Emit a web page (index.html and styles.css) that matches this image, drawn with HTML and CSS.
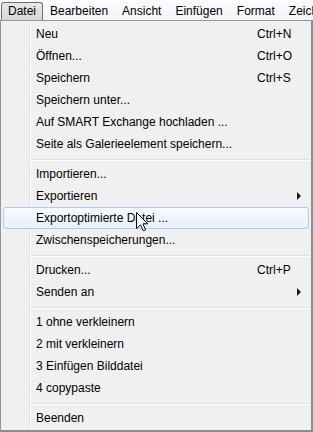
FILE: index.html
```html
<!DOCTYPE html>
<html lang="de">
<head>
  <meta charset="UTF-8">
  <title>Datei</title>
  <link rel="stylesheet" href="styles.css">
</head>
<body>

  <div class="menubar">
    <div class="bar-item active">Datei</div>
    <div class="bar-item">Bearbeiten</div>
    <div class="bar-item">Ansicht</div>
    <div class="bar-item">Einfügen</div>
    <div class="bar-item">Format</div>
    <div class="bar-item">Zeichnen</div>
  </div>

  <div class="menu">
    <div class="item"><span class="label">Neu</span><span class="key">Ctrl+N</span></div>
    <div class="item"><span class="label">Öffnen...</span><span class="key">Ctrl+O</span></div>
    <div class="item"><span class="label">Speichern</span><span class="key">Ctrl+S</span></div>
    <div class="item"><span class="label">Speichern unter...</span></div>
    <div class="item"><span class="label">Auf SMART Exchange hochladen ...</span></div>
    <div class="item"><span class="label">Seite als Galerieelement speichern...</span></div>
    <div class="sep"></div>
    <div class="item"><span class="label">Importieren...</span></div>
    <div class="item"><span class="label">Exportieren</span><span class="arrow"></span></div>
    <div class="item hover"><span class="label">Exportoptimierte Datei ...</span></div>
    <div class="item"><span class="label">Zwischenspeicherungen...</span></div>
    <div class="sep"></div>
    <div class="item"><span class="label">Drucken...</span><span class="key">Ctrl+P</span></div>
    <div class="item"><span class="label">Senden an</span><span class="arrow"></span></div>
    <div class="sep"></div>
    <div class="item"><span class="label">1 ohne verkleinern</span></div>
    <div class="item"><span class="label">2 mit verkleinern</span></div>
    <div class="item"><span class="label">3 Einfügen Bilddatei</span></div>
    <div class="item"><span class="label">4 copypaste</span></div>
    <div class="sep"></div>
    <div class="item"><span class="label">Beenden</span></div>
  </div>

  <svg class="cursor" width="13" height="20" viewBox="0 0 13 20">
    <path d="M0.5 0.5 L0.5 16.5 L4.5 12.8 L7.3 18.8 L9.6 17.8 L6.9 11.8 L11.8 11.8 Z" fill="#fff" stroke="#000" stroke-width="1" stroke-linejoin="miter"/>
  </svg>

</body>
</html>
```

FILE: styles.css
```css
body {
  margin: 0;
  width: 313px;
  height: 432px;
  overflow: hidden;
  background: #fff;
  font-family: "Liberation Sans", Arial, sans-serif;
  font-size: 12px;
  color: #000;
  position: relative;
}

.menubar {
  display: flex;
  height: 20px;
  padding-left: 1px;
  align-items: flex-end;
  background: linear-gradient(#fdfdfe, #f1f3f7);
  white-space: nowrap;
}

.bar-item {
  height: 17px;
  line-height: 16px;
  padding: 0 6px;
  border: 1px solid transparent;
  border-bottom: none;
}

.bar-item.active {
  border-color: #6e6e6e;
  border-radius: 3px 3px 0 0;
  background: linear-gradient(#e8e8e8, #d6d6d6);
}

.menu {
  box-sizing: border-box;
  width: 313px;
  padding: 2px 2px 1px 2px;
  border: 1px solid #979797;
  border-right: 2px solid #8c8c8c;
  border-bottom: 2px solid #8c8c8c;
  background: linear-gradient(to right, #f0f0f0 0 28px, #e2e3e3 28px 29px, #fff 29px 30px, #f0f0f0 30px);
}

.item {
  display: flex;
  align-items: center;
  height: 22px;
  padding-left: 32px;
  box-sizing: border-box;
  border: 1px solid transparent;
  border-radius: 3px;
}

.item .label {
  flex: 1;
  white-space: nowrap;
}

.item .key {
  width: 40px;
  margin-right: 11px;
  white-space: nowrap;
}

.item .arrow {
  width: 0;
  height: 0;
  margin-right: 7px;
  border-left: 4px solid #1c1c1c;
  border-top: 4px solid transparent;
  border-bottom: 4px solid transparent;
}

.item.hover {
  border-color: #aeccf1;
  background: linear-gradient(#f7faff, #e9f0fb);
}

.sep {
  height: 8px;
  margin-left: 28px;
  box-sizing: border-box;
  padding-top: 4px;
}

.sep::before {
  content: "";
  display: block;
  height: 1px;
  background: #e0e0e0;
  border-bottom: 1px solid #fff;
}

.cursor {
  position: absolute;
  left: 136px;
  top: 212px;
}
```
